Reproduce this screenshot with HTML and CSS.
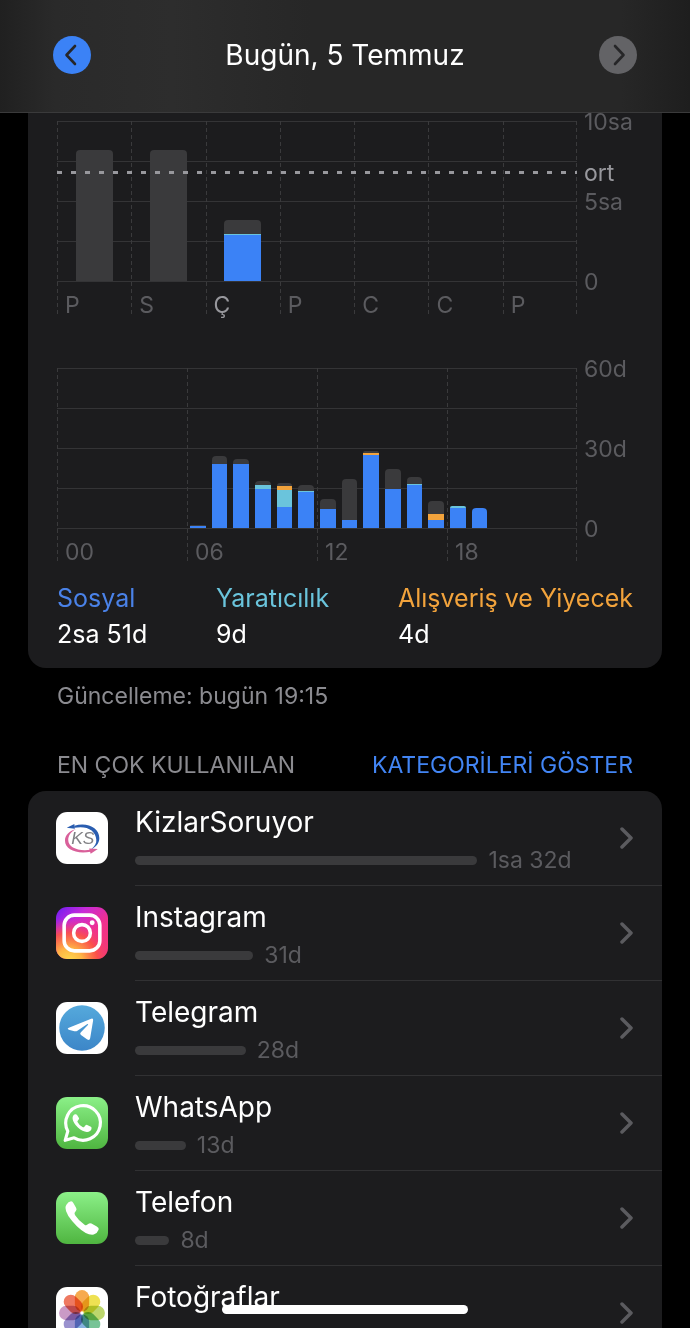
FILE: index.html
```html
<!DOCTYPE html>
<html lang="tr">
<head>
  <meta charset="utf-8">
  <meta name="viewport" content="width=device-width, initial-scale=1">
  <title>Ekran Süresi</title>
  <link rel="stylesheet" href="styles.css">
</head>
<body>
  <header class="topbar">
    <button class="day-btn" aria-label="Önceki gün">
      <svg viewBox="0 0 38 38"><path d="M22 10 L13.500 19 L22 28"/></svg>
    </button>
    <h1>Bugün, 5 Temmuz</h1>
    <button class="day-btn" aria-label="Sonraki gün" disabled>
      <svg viewBox="0 0 38 38"><path d="M16 10 L24.500 19 L16 28"/></svg>
    </button>
  </header>

  <main>
    <section class="card charts">
      <div class="chart">
        <div class="plot" id="week"><div class="average"></div></div>
        <div class="axis">
          <span>10sa</span>
          <span>5sa</span>
          <span>0</span>
          <span class="average-label">ort</span>
        </div>
      </div>

      <div class="chart">
        <div class="plot" id="hours"></div>
        <div class="axis">
          <span>60d</span>
          <span>30d</span>
          <span>0</span>
        </div>
      </div>

      <dl class="legend">
        <div><dt class="social">Sosyal</dt><dd>2sa 51d</dd></div>
        <div><dt class="creative">Yaratıcılık</dt><dd>9d</dd></div>
        <div><dt class="shopping">Alışveriş ve Yiyecek</dt><dd>4d</dd></div>
      </dl>
    </section>

    <p class="updated">Güncelleme: bugün 19:15</p>

    <div class="section-head">
      <h2>EN ÇOK KULLANILAN</h2>
      <button class="link-btn">KATEGORİLERİ GÖSTER</button>
    </div>

    <ul class="card apps">
      <li><a href="#kizlarsoruyor">
        <svg class="icon" viewBox="0 0 51 51">
          <rect width="51" height="51" rx="11" fill="#fff"/>
          <path d="M18 13.500C31 9.500 42.500 16 42.500 25.500C42.500 31 39 34.500 34 37C38 34 40 30.500 39.500 27C39 18 30 13 18 15.500Z" fill="#2a5db0"/>
          <path d="M10.500 15.500L18 11.800L18.500 16.500Z" fill="#2a5db0"/>
          <path d="M20 16.500C13 18.500 8.800 23 8.800 28C8.800 37 20 41.500 34 39V37C22 38.800 12 35 12 27.500C12 23 15 19 20 16.500Z" fill="#d9609a"/>
          <path d="M32.500 35.800L41 36.200L34 41Z" fill="#d9609a"/>
          <text x="15" y="31" class="ks">KS</text>
        </svg>
        <div class="info">
          <span class="name">KizlarSoruyor</span>
          <span class="usage"><i class="bar" style="width: 72.700%"></i>1sa 32d</span>
        </div>
        <svg class="chevron" viewBox="0 0 13 24"><path d="M2 3 L11 12 L2 21"/></svg>
      </a></li>
      <li><a href="#instagram">
        <svg class="icon" viewBox="0 0 51 51">
          <defs>
            <linearGradient id="ig-base" x1="0" y1="0" x2="1" y2="1">
              <stop offset="0" stop-color="#6a1cf5"/>
              <stop offset=".3" stop-color="#c72bd8"/>
              <stop offset=".6" stop-color="#f0308f"/>
              <stop offset="1" stop-color="#f43a6a"/>
            </linearGradient>
            <radialGradient id="ig-warm" cx=".25" cy="1.050" r=".85">
              <stop offset="0" stop-color="#ffdc4e"/>
              <stop offset=".3" stop-color="#ffb545"/>
              <stop offset=".65" stop-color="#fb5245" stop-opacity=".9"/>
              <stop offset="1" stop-color="#f0308f" stop-opacity="0"/>
            </radialGradient>
          </defs>
          <rect width="51" height="51" rx="11" fill="url(#ig-base)"/>
          <rect width="51" height="51" rx="11" fill="url(#ig-warm)"/>
          <g fill="none" stroke="#fff" stroke-width="3.500">
            <rect x="8" y="8" width="35" height="35" rx="10"/>
            <circle cx="25.500" cy="25.500" r="8.200"/>
          </g>
          <circle cx="35.500" cy="15.500" r="2.400" fill="#fff"/>
        </svg>
        <div class="info">
          <span class="name">Instagram</span>
          <span class="usage"><i class="bar" style="width: 25.100%"></i>31d</span>
        </div>
        <svg class="chevron" viewBox="0 0 13 24"><path d="M2 3 L11 12 L2 21"/></svg>
      </a></li>
      <li><a href="#telegram">
        <svg class="icon" viewBox="0 0 51 51">
          <defs>
            <linearGradient id="tg" x1="0" y1="0" x2="0" y2="1">
              <stop offset="0" stop-color="#55a9dc"/>
              <stop offset="1" stop-color="#3c86c8"/>
            </linearGradient>
          </defs>
          <rect width="51" height="51" rx="11" fill="#fff"/>
          <circle cx="25.500" cy="25.500" r="22.300" fill="url(#tg)"/>
          <path d="M12 25.500L34.500 16.400Q36.800 15.700 36.400 18.200L33.500 35.500Q33 38.200 30.700 36.800L24.500 32.300Q23 31.300 24.200 30L31.500 22.300Q31.600 21.200 30.400 21.900L21 28.200Q19.600 29.100 18 28.600L12.500 27.200Q10.700 26.300 12 25.500Z" fill="#fff"/>
        </svg>
        <div class="info">
          <span class="name">Telegram</span>
          <span class="usage"><i class="bar" style="width: 23.500%"></i>28d</span>
        </div>
        <svg class="chevron" viewBox="0 0 13 24"><path d="M2 3 L11 12 L2 21"/></svg>
      </a></li>
      <li><a href="#whatsapp">
        <svg class="icon" viewBox="0 0 51 51">
          <defs>
            <linearGradient id="green" x1="0" y1="0" x2="0" y2="1">
              <stop offset="0" stop-color="#8bf088"/>
              <stop offset="1" stop-color="#4fb540"/>
            </linearGradient>
          </defs>
          <rect width="51" height="51" rx="11" fill="url(#green)"/>
          <path d="M9 42.500L11.600 33.500A17 17 0 1 1 17.800 40Z" fill="none" stroke="#fff" stroke-width="3.100" stroke-linejoin="round"/>
          <path d="M20.500 17.300Q19.700 16.600 18.500 17Q16 18.200 16.300 21.500Q17 25.500 21.500 30Q26.500 34.500 30.500 34.300Q34 33.800 34.800 31.300Q35.200 29.800 34.200 29.200L30.600 27.400Q29.700 27 29 27.800L27.600 29.500Q27 30 26 29.500Q22.700 27.800 21.100 24.600Q20.700 23.800 21.300 23.200L22.400 21.900Q22.700 21.400 22.500 20.700Z" fill="#fff"/>
        </svg>
        <div class="info">
          <span class="name">WhatsApp</span>
          <span class="usage"><i class="bar" style="width: 10.800%"></i>13d</span>
        </div>
        <svg class="chevron" viewBox="0 0 13 24"><path d="M2 3 L11 12 L2 21"/></svg>
      </a></li>
      <li><a href="#telefon">
        <svg class="icon" viewBox="0 0 51 51">
          <rect width="51" height="51" rx="11" fill="url(#green)"/>
          <path d="M10.200 12.500Q12 9.300 14.800 9.100Q16.200 9.200 17.300 11.300L19.800 15.600Q20.700 17.400 19.300 18.900Q17.300 20.600 18.600 22.500Q22.500 28.500 28 32Q29.800 33.200 31.500 31.500Q33 30 34.800 30.900L40 33.800Q42.500 35.300 41.800 37Q40.500 40.500 37 41.800Q30.500 43 20.500 33.500Q9 22 9.300 15.500Q9.300 14 10.200 12.500Z" fill="#fff"/>
        </svg>
        <div class="info">
          <span class="name">Telefon</span>
          <span class="usage"><i class="bar" style="width: 7.300%"></i>8d</span>
        </div>
        <svg class="chevron" viewBox="0 0 13 24"><path d="M2 3 L11 12 L2 21"/></svg>
      </a></li>
      <li><a href="#fotograflar">
        <svg class="icon" viewBox="0 0 51 51">
          <rect width="51" height="51" rx="11" fill="#fff"/>
          <g class="petals" transform="translate(25.500 25.500)">
            <rect x="-7" y="-22.500" width="14" height="21" rx="7" fill="#f5a13c"/>
            <rect x="-7" y="-22.500" width="14" height="21" rx="7" fill="#ecde3f" transform="rotate(45)"/>
            <rect x="-7" y="-22.500" width="14" height="21" rx="7" fill="#b5d25c" transform="rotate(90)"/>
            <rect x="-7" y="-22.500" width="14" height="21" rx="7" fill="#68bd8b" transform="rotate(135)"/>
            <rect x="-7" y="-22.500" width="14" height="21" rx="7" fill="#79a9dc" transform="rotate(180)"/>
            <rect x="-7" y="-22.500" width="14" height="21" rx="7" fill="#8f86c9" transform="rotate(225)"/>
            <rect x="-7" y="-22.500" width="14" height="21" rx="7" fill="#c48fc0" transform="rotate(270)"/>
            <rect x="-7" y="-22.500" width="14" height="21" rx="7" fill="#ec6a50" transform="rotate(315)"/>
          </g>
        </svg>
        <div class="info">
          <span class="name">Fotoğraflar</span>
          <span class="usage"><i class="bar" style="width: 6%"></i></span>
        </div>
        <svg class="chevron" viewBox="0 0 13 24"><path d="M2 3 L11 12 L2 21"/></svg>
      </a></li>
    </ul>
  </main>

  <div class="home-indicator"></div>

  <script>
    // minutes per category: [social, creative, shopping, other]
    const week = [
      { label: 'P', use: [0, 0, 0, 491] },
      { label: 'S', use: [0, 0, 0, 491] },
      { label: 'Ç', use: [171, 5, 0, 54], today: true },
      { label: 'P' },
      { label: 'C' },
      { label: 'C' },
      { label: 'P' }
    ];

    const hourUse = {
      6: [0.6, 0, 0, 0.4],
      7: [24, 0, 0, 3],
      8: [24, 0, 0, 2],
      9: [14.6, 1.6, 0, 1.4],
      10: [7.8, 6.4, 1.4, 1.2],
      11: [13.6, 0.4, 0, 2],
      12: [7, 0, 0, 4],
      13: [3, 0, 0, 15.4],
      14: [27.3, 0, 0.8, 0.9],
      15: [14.6, 0, 0, 7.4],
      16: [16.2, 0.3, 0, 2.8],
      17: [3, 0, 2.4, 4.8],
      18: [7.6, 0.8, 0, 0],
      19: [7.4, 0, 0, 0]
    };
    const hours = [];
    for (let h = 0; h < 24; h++) {
      hours.push({ label: h % 6 === 0 ? String(h).padStart(2, '0') : '', use: hourUse[h] });
    }

    const names = ['social', 'creative', 'shopping', 'other'];

    function drawChart(id, days, max) {
      const plot = document.getElementById(id);
      days.forEach(day => {
        const col = document.createElement('div');
        col.className = 'col' + (day.label ? ' ruled' : '') + (day.today ? ' today' : '');
        let parts = '';
        (day.use || []).forEach((min, i) => {
          if (min) parts = `<i class="${names[i]}" style="height: ${min / max * 100}%"></i>` + parts;
        });
        col.innerHTML = `<div class="stack">${parts}</div><span class="tick">${day.label}</span>`;
        plot.appendChild(col);
      });
    }

    drawChart('week', week, 600);
    drawChart('hours', hours, 60);
  </script>
</body>
</html>
```
FILE: styles.css
```css
* { box-sizing: border-box; }
body {
  display: flex;
  flex-direction: column;
  height: 100vh;
  margin: 0;
  background-color: #000;
  color: #fff;
  font-family: Inter, "Liberation Sans", sans-serif;
  font-size: 23px;
  line-height: 28px;
}
h1, h2, p, ul, dl, dd { margin: 0; padding: 0; font-weight: 400; }
button { border: none; padding: 0; font: inherit; cursor: pointer; }

.topbar {
  flex: none;
  display: flex;
  align-items: center;
  justify-content: space-between;
  padding: 36px 53px 38px;
  border-bottom: 1px solid #3a3a3b;
  background: linear-gradient(to right, #202020, #2a2a2a 8%, #2d2d2d 25%, #272727 45%, #272727 90%, #1e1e1e);
}
.topbar h1 { font-size: 28px; line-height: 38px; }
.day-btn {
  width: 38px;
  height: 38px;
  border-radius: 50%;
  background-color: #3b82f6;
}
.day-btn:disabled { background-color: #636366; }
.day-btn svg { display: block; }
.day-btn path {
  fill: none;
  stroke: #262628;
  stroke-width: 2.6;
  stroke-linecap: round;
  stroke-linejoin: round;
}

main {
  flex: 1;
  min-height: 0;
  padding: 0 28px;
  overflow-y: auto;
  scrollbar-width: none;
}
.card { background-color: #1c1c1e; border-radius: 18px; }

/* charts */
.charts { padding: 8px 29px 16px; border-radius: 0 0 18px 18px; }
.chart { display: flex; margin-bottom: 51px; }
.chart + .chart { margin-bottom: 16px; }
.plot {
  flex: 1;
  display: flex;
  position: relative;
  background:
    repeating-linear-gradient(to bottom, #3a3a3c 0 4px, transparent 4px 7px) right top / 1px 100% no-repeat,
    repeating-linear-gradient(to bottom, #343436 0 1px, transparent 1px 40px) left top / 100% 161px no-repeat;
}
.col { flex: 1; min-width: 0; }
.col.ruled {
  background: repeating-linear-gradient(to bottom, #3a3a3c 0 4px, transparent 4px 7px) left top / 1px 100% no-repeat;
}
.stack {
  display: flex;
  flex-direction: column;
  justify-content: flex-end;
  height: 160px;
  padding: 0 25%;
}
#hours .stack { padding: 0 14%; }
.stack i:first-child { border-radius: 4px 4px 0 0; }
.stack .social { background-color: #3b82f6; }
.stack .creative { background-color: #6ac4dc; }
.stack .shopping { background-color: #f2a33c; }
.stack .other { background-color: #3a3a3c; }
.tick {
  display: block;
  padding: 12px 0 0 8px;
  line-height: 24px;
  height: 36px;
  white-space: nowrap;
  color: #5b5b5f;
}
.today .tick { color: #98989d; }
.average {
  position: absolute;
  top: 50px;
  left: 0;
  right: 0;
  height: 3px;
  background: repeating-linear-gradient(to right, #98989d 0 5px, transparent 5px 14px);
}
.axis {
  position: relative;
  flex: none;
  display: flex;
  flex-direction: column;
  justify-content: space-between;
  width: 56px;
  height: 188px;
  margin: -13px 0 -15px;
  padding-left: 7px;
  color: #5b5b5f;
}
.average-label { position: absolute; top: 51px; color: #98989d; }

.legend {
  display: flex;
  justify-content: space-between;
  font-size: 25px;
  line-height: 36px;
}
dt.social { color: #4a82e8; }
dt.creative { color: #6ac4dc; }
dt.shopping { color: #f2a33c; }

.updated { padding: 14px 29px 0; color: #8b8b90; }
.section-head {
  display: flex;
  justify-content: space-between;
  padding: 41px 29px 12px;
}
.section-head h2 { font-size: 23px; color: #8b8b90; }
.link-btn { background: none; color: #4285f4; }

/* app list */
.apps { list-style: none; overflow: hidden; }
.apps a {
  display: flex;
  align-items: center;
  padding-left: 28px;
  color: inherit;
  text-decoration: none;
}
.icon { flex: none; width: 52px; height: 52px; margin-right: 27px; }
.ks { font: italic 17px "Liberation Sans", sans-serif; fill: #808084; }
.petals rect { mix-blend-mode: multiply; opacity: 0.9; }
.info { flex: 1; padding: 13px 0 11px; }
.name { display: block; font-size: 28px; line-height: 36px; }
.usage {
  display: flex;
  align-items: center;
  min-height: 28px;
  margin-top: 6px;
  color: #5b5b5f;
}
.bar {
  height: 9px;
  margin-right: 11px;
  border-radius: 5px;
  background-color: #3a3a3c;
}
.chevron { flex: none; width: 13px; height: 24px; margin: 0 29px 0 14px; }
.chevron path {
  fill: none;
  stroke: #5b5b5f;
  stroke-width: 3.5;
  stroke-linecap: round;
  stroke-linejoin: round;
}
/* separator starts at the app name, not at the icon */
.apps li + li::before {
  content: "";
  display: block;
  height: 1px;
  margin-left: 107px;
  background-color: #313133;
}

.home-indicator {
  position: fixed;
  bottom: 14px;
  left: 50%;
  width: 246px;
  height: 9px;
  margin-left: -123px;
  border-radius: 5px;
  background-color: #fff;
}
```
